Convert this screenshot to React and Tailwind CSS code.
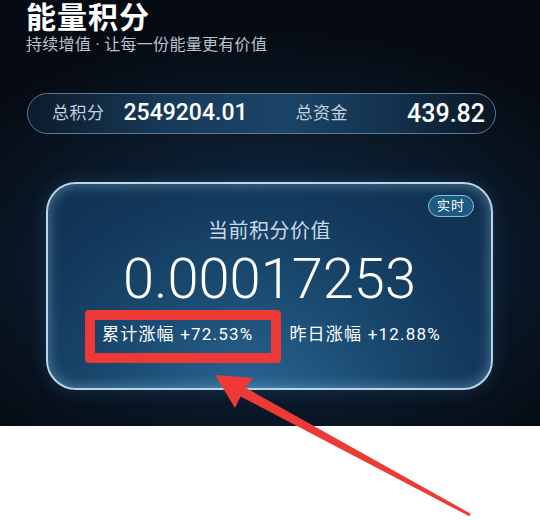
import React from "react";

const cjk = "font-['Roboto','Noto_Sans_CJK_SC',sans-serif]";

function StatsBar() {
  return (
    <div className="ml-[27px] mr-[44px] mt-[38px] h-[41px] rounded-full border border-[#5d7890] bg-[linear-gradient(90deg,#0c1b2b_0%,#173a5a_30%,#1b4468_55%,#12304b_80%,#0a1522_100%)] flex items-center pl-[24px] pr-[8px]">
      <span className="text-[17px] text-[#c4d0dc] tracking-[0.5px]">总积分</span>
      <span className="ml-[19px] text-[23px] font-medium text-white">2549204.01</span>
      <span className="ml-[48px] text-[17px] text-[#c4d0dc] tracking-[0.5px]">总资金</span>
      <span className="ml-auto mr-[2px] text-[25px] font-medium text-white">439.82</span>
    </div>
  );
}

function ValueCard() {
  return (
    <div className="relative ml-[46px] mr-[47px] mt-[48px] h-[208px] rounded-[30px] border-2 border-[#b9d6e8] bg-[radial-gradient(ellipse_at_45%_110%,#2a6796_0%,#1a4a70_40%,#12375a_70%,#0f2f4e_100%)] shadow-[inset_0_0_14px_rgba(170,215,240,0.45),0_0_18px_rgba(60,130,190,0.25)] pt-[33px] flex flex-col items-center">
      <span className="absolute top-[11px] right-[17px] h-[22px] px-[8px] rounded-full border border-[#8fbcd8] bg-[#1d5a82] text-[13px] leading-[20px] text-white tracking-[1px]">
        实时
      </span>
      <div className="text-[20px] leading-[28px] text-[#cbd9e6] tracking-[0.5px]">当前积分价值</div>
      <div className="mt-[6px] text-[56px] leading-[56px] font-light text-white">0.00017253</div>
      <div className="self-stretch mt-[15px] flex items-center pl-[54px] gap-[36px] text-[17px] leading-[24px] text-white">
        <span className="tracking-[1.2px]">累计涨幅 +72.53%</span>
        <span className="tracking-[1.2px]">昨日涨幅 +12.88%</span>
      </div>
    </div>
  );
}

export default function App() {
  return (
    <div className={`relative w-[540px] h-[520px] bg-white overflow-hidden ${cjk}`}>
      <div className="h-[426px] bg-[radial-gradient(ellipse_70%_55%_at_50%_62%,#123250_0%,#0b1a2b_55%,#060b13_100%)]">
        <div className="pl-[26px]">
          <h1 className="text-[30px] leading-[36px] font-bold text-white tracking-[1px]">能量积分</h1>
          <p className="text-[16px] leading-[20px] text-[#b8c3cd] -mt-[1px] tracking-[0.3px]">持续增值 · 让每一份能量更有价值</p>
        </div>
        <StatsBar />
        <ValueCard />
      </div>

      {/* annotation overlay */}
      <div className="absolute left-[85px] top-[310px] w-[196px] h-[53px] border-[10px] border-[#ee3a36] rounded-[4px]" />
      <svg className="absolute left-0 top-0" width="540" height="520" viewBox="0 0 540 520">
        <polygon points="215,375 253,378 245.4,387.6 470.7,513.7 469.3,516.3 240.6,396.4 235,408" fill="#ee3a36" />
      </svg>
    </div>
  );
}
